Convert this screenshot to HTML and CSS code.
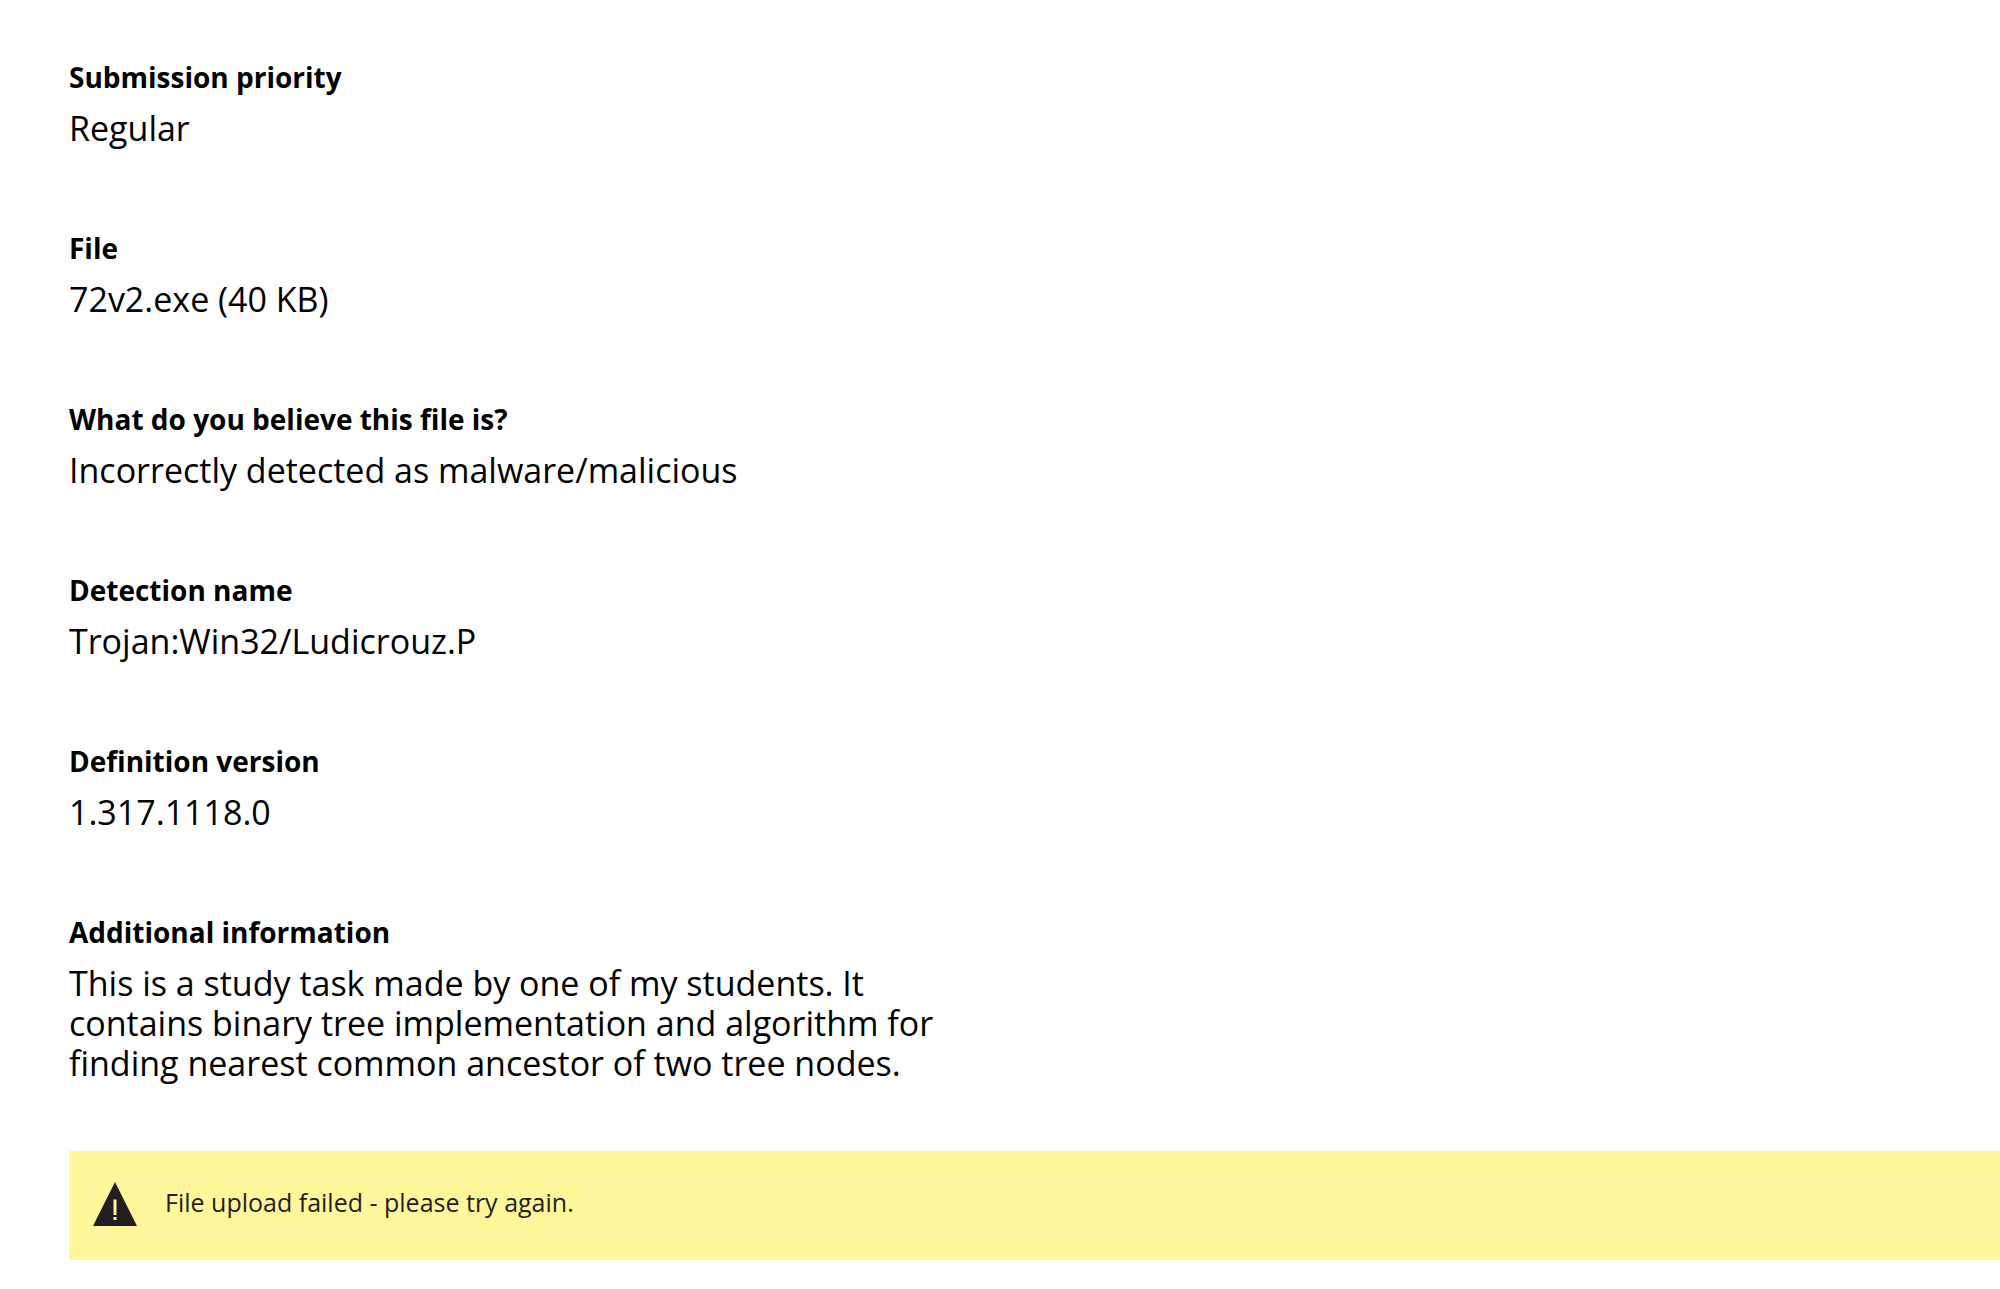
FILE: index.html
```html
<!DOCTYPE html>
<html lang="en">
<head>
    <meta charset="UTF-8">
    <meta name="viewport" content="width=device-width, initial-scale=1.0">
    <title>Submission details</title>
    <link rel="stylesheet" href="styles.css">
</head>
<body>
    <main>
        <dl class="details">
            <div class="detail">
                <dt>Submission priority</dt>
                <dd>Regular</dd>
            </div>
            <div class="detail">
                <dt>File</dt>
                <dd>72v2.exe (40 KB)</dd>
            </div>
            <div class="detail">
                <dt>What do you believe this file is?</dt>
                <dd>Incorrectly detected as malware/malicious</dd>
            </div>
            <div class="detail">
                <dt>Detection name</dt>
                <dd>Trojan:Win32/Ludicrouz.P</dd>
            </div>
            <div class="detail">
                <dt>Definition version</dt>
                <dd>1.317.1118.0</dd>
            </div>
            <div class="detail">
                <dt>Additional information</dt>
                <dd>This is a study task made by one of my students. It contains binary tree implementation and algorithm for finding nearest common ancestor of two tree nodes.</dd>
            </div>
        </dl>
        <div class="alert" role="alert">
            <svg class="alert-icon" viewBox="0 0 44 44" aria-hidden="true">
                <path d="M22 0L44 44H0z" fill="#231f20"/>
                <path d="M20.5 17.5h3v15.5h-3z" fill="#fff799"/>
                <path d="M20.5 35h3v3h-3z" fill="#fff799"/>
            </svg>
            <p>File upload failed - please try again.</p>
        </div>
    </main>
</body>
</html>
```
FILE: styles.css
```css
body {
    margin: 0;
    background-color: #fff;
    color: #000;
    font-family: "Segoe UI", "Open Sans", sans-serif;
}
main {
    padding: 57px 0 28px 69px;
}
.details {
    display: flex;
    flex-direction: column;
    gap: 80px;
    margin: 0 0 68px;
}
.detail {
    max-width: 900px;
}
dt {
    font-size: 28px;
    line-height: 40px;
    font-weight: 700;
}
dd {
    margin: 11px 0 0;
    font-size: 34px;
    line-height: 40px;
}
.alert {
    display: flex;
    align-items: flex-start;
    gap: 28px;
    padding: 31px 24px 29px;
    background-color: #fff799;
    color: #231f20;
}
.alert-icon {
    flex: none;
    width: 44px;
    height: 44px;
    margin-bottom: 5px;
}
.alert p {
    margin: 0;
    font-size: 25px;
    line-height: 40px;
}
```
